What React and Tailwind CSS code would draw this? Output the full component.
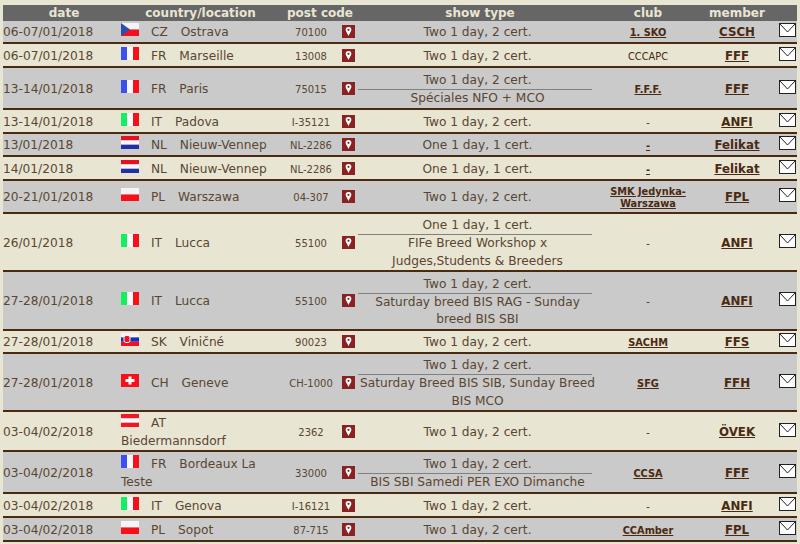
const Flag = ({ c }) => {
  const shapes = {
    CZ: (
      <>
        <rect width="18" height="6.5" fill="#f4f4f4" />
        <rect y="6.5" width="18" height="6.5" fill="#f01020" />
        <path d="M0 0 L9 6.5 L0 13 Z" fill="#2a4fb0" />
      </>
    ),
    FR: (
      <>
        <rect width="6" height="13" fill="#3a50f0" />
        <rect x="6" width="6" height="13" fill="#f8f8f8" />
        <rect x="12" width="6" height="13" fill="#f80f1a" />
      </>
    ),
    IT: (
      <>
        <rect width="6" height="13" fill="#10f060" />
        <rect x="6" width="6" height="13" fill="#f8f8f8" />
        <rect x="12" width="6" height="13" fill="#f80f1a" />
      </>
    ),
    NL: (
      <>
        <rect width="18" height="4.4" fill="#e81020" />
        <rect y="4.4" width="18" height="4.3" fill="#f8f8f8" />
        <rect y="8.7" width="18" height="4.3" fill="#2030a8" />
      </>
    ),
    PL: (
      <>
        <rect width="18" height="6.5" fill="#f4f4f4" />
        <rect y="6.5" width="18" height="6.5" fill="#f80f1a" />
      </>
    ),
    SK: (
      <>
        <rect width="18" height="4.4" fill="#f4f4f4" />
        <rect y="4.4" width="18" height="4.3" fill="#1030c0" />
        <rect y="8.7" width="18" height="4.3" fill="#f01020" />
        <rect x="3" y="2.5" width="6" height="7" rx="2" fill="#f01020" stroke="#f4f4f4" />
      </>
    ),
    CH: (
      <>
        <rect width="18" height="13" fill="#f80f1a" />
        <path d="M7.5 2.5h3v2.5h3v3h-3v2.5h-3V8h-3V5h3Z" fill="#fff" />
      </>
    ),
    AT: (
      <>
        <rect width="18" height="4.4" fill="#f01828" />
        <rect y="4.4" width="18" height="4.3" fill="#f8f8f8" />
        <rect y="8.7" width="18" height="4.3" fill="#f01828" />
      </>
    ),
  }
  return (
    <svg width="18" height="13" viewBox="0 0 18 13" className="inline-block align-top -mt-[1px] mr-[12px]">
      {shapes[c]}
    </svg>
  )
}

const Pin = () => (
  <svg width="13" height="13" viewBox="0 0 13 13" className="block ml-[5px]">
    <rect width="13" height="13" fill="#8a2222" />
    <path d="M6.5 2 C4.6 2 3.6 3.4 3.6 4.8 C3.6 6.6 5.6 8.4 6.5 11 C7.4 8.4 9.4 6.6 9.4 4.8 C9.4 3.4 8.4 2 6.5 2 Z" fill="#fff" />
    <circle cx="6.5" cy="4.8" r="1.1" fill="#8a2222" />
  </svg>
)

const Envelope = () => (
  <svg width="17" height="14" viewBox="0 0 17 14" className="block mb-[3px]">
    <rect x="0.5" y="0.5" width="16" height="13" fill="#fff" stroke="#222" />
    <path d="M1 1 L8.5 9 L16 1" fill="none" stroke="#222" />
  </svg>
)

const rows = [
  { date: '06-07/01/2018', c: 'CZ', city: 'Ostrava', code: '70100', show: ['Two 1 day, 2 cert.'], club: '1. SKO', clubLink: true, member: 'CSCH', h: 'h-[23px]' },
  { date: '06-07/01/2018', c: 'FR', city: 'Marseille', code: '13008', show: ['Two 1 day, 2 cert.'], club: 'CCCAPC', member: 'FFF', h: 'h-[24px]' },
  { date: '13-14/01/2018', c: 'FR', city: 'Paris', code: '75015', show: ['Two 1 day, 2 cert.', 'Spéciales NFO + MCO'], club: 'F.F.F.', clubLink: true, member: 'FFF', h: 'h-[42px]' },
  { date: '13-14/01/2018', c: 'IT', city: 'Padova', code: 'I-35121', show: ['Two 1 day, 2 cert.'], club: '-', member: 'ANFI', h: 'h-[24px]' },
  { date: '13/01/2018', c: 'NL', city: 'Nieuw-Vennep', code: 'NL-2286', show: ['One 1 day, 1 cert.'], club: '-', clubLink: true, member: 'Felikat', h: 'h-[23px]' },
  { date: '14/01/2018', c: 'NL', city: 'Nieuw-Vennep', code: 'NL-2286', show: ['One 1 day, 1 cert.'], club: '-', clubLink: true, member: 'Felikat', h: 'h-[24px]' },
  { date: '20-21/01/2018', c: 'PL', city: 'Warszawa', code: '04-307', show: ['Two 1 day, 2 cert.'], club: 'SMK Jedynka-Warszawa', clubLink: true, member: 'FPL', h: 'h-[33px]' },
  { date: '26/01/2018', c: 'IT', city: 'Lucca', code: '55100', show: ['One 1 day, 1 cert.', 'FIFe Breed Workshop x Judges,Students & Breeders'], club: '-', member: 'ANFI', h: 'h-[58px]' },
  { date: '27-28/01/2018', c: 'IT', city: 'Lucca', code: '55100', show: ['Two 1 day, 2 cert.', 'Saturday breed BIS RAG - Sunday breed BIS SBI'], club: '-', member: 'ANFI', h: 'h-[59px]' },
  { date: '27-28/01/2018', c: 'SK', city: 'Viničné', code: '90023', show: ['Two 1 day, 2 cert.'], club: 'SACHM', clubLink: true, member: 'FFS', h: 'h-[23px]' },
  { date: '27-28/01/2018', c: 'CH', city: 'Geneve', code: 'CH-1000', show: ['Two 1 day, 2 cert.', 'Saturday Breed BIS SIB, Sunday Breed BIS MCO'], club: 'SFG', clubLink: true, member: 'FFH', h: 'h-[58px]' },
  { date: '03-04/02/2018', c: 'AT', city: 'Biedermannsdorf', code: '2362', show: ['Two 1 day, 2 cert.'], club: '-', member: 'ÖVEK', h: 'h-[40px]' },
  { date: '03-04/02/2018', c: 'FR', city: 'Bordeaux La Teste', code: '33000', show: ['Two 1 day, 2 cert.', 'BIS SBI Samedi PER EXO Dimanche'], club: 'CCSA', clubLink: true, member: 'FFF', h: 'h-[42px]' },
  { date: '03-04/02/2018', c: 'IT', city: 'Genova', code: 'I-16121', show: ['Two 1 day, 2 cert.'], club: '-', member: 'ANFI', h: 'h-[24px]' },
  { date: '03-04/02/2018', c: 'PL', city: 'Sopot', code: '87-715', show: ['Two 1 day, 2 cert.'], club: 'CCAmber', clubLink: true, member: 'FPL', h: 'h-[24px]' },
]

export default function App() {
  return (
    <div className="w-[800px] h-[544px] overflow-hidden bg-[#e9e5d3] pt-[5px] pl-[3px] font-['DejaVu_Sans','Liberation_Sans',sans-serif] text-[12.2px] leading-[17.25px] text-[#5a4630]">
      <table className="table-fixed w-[794px] border-separate border-spacing-0">
        <colgroup>
          <col className="w-[118px]" />
          <col className="w-[164px]" />
          <col className="w-[52px]" />
          <col className="w-[21px]" />
          <col className="w-[239px]" />
          <col className="w-[102px]" />
          <col className="w-[76px]" />
          <col className="w-[22px]" />
        </colgroup>
        <thead>
          <tr className="h-[16px] bg-[#666666] text-[#e9e5d3] text-[12px] leading-[16px] font-bold">
            <th className="p-0 pl-[4px]">date</th>
            <th className="p-0 pr-[5px]">country/location</th>
            <th colSpan={2} className="p-0 pr-[3px]">post code</th>
            <th className="p-0 pl-[5px]">show type</th>
            <th className="p-0">club</th>
            <th className="p-0">member</th>
            <th className="p-0"></th>
          </tr>
        </thead>
        <tbody>
          {rows.map((r, i) => (
            <tr key={i} className={`${r.h} ${i % 2 === 0 ? 'bg-[#cacaca]' : 'bg-[#e9e5d3]'} [&>td]:border-b-2 [&>td]:border-[#4a2a10]`}>
              <td className="p-0 pt-[3px] whitespace-nowrap">{r.date}</td>
              <td className="p-0 pt-[3px] pr-[6px]">
                <span className="whitespace-nowrap">
                  <Flag c={r.c} />
                  {r.c}
                  <span className="inline-block w-[9px]"></span>
                </span>{' '}
                {r.city}
              </td>
              <td className="p-0 pt-[3px] text-center text-[10px]">{r.code}</td>
              <td className="p-0"><Pin /></td>
              <td className="p-0 pt-[3px] text-center">
                {r.show.map((line, j) => (
                  <div key={j}>
                    {j > 0 && <div className="w-[234px] border-t border-[#808080]"></div>}
                    {line}
                  </div>
                ))}
              </td>
              <td className={`p-0 pt-[3px] text-center text-[9.8px] leading-[12px] text-[#4a2a10] ${r.clubLink ? 'font-bold underline' : ''}`}>{r.club}</td>
              <td className="p-0 pt-[3px] text-center text-[11.8px] font-bold underline text-[#4a2a10]">{r.member}</td>
              <td className="p-0 pl-[4px]"><Envelope /></td>
            </tr>
          ))}
        </tbody>
      </table>
    </div>
  )
}
